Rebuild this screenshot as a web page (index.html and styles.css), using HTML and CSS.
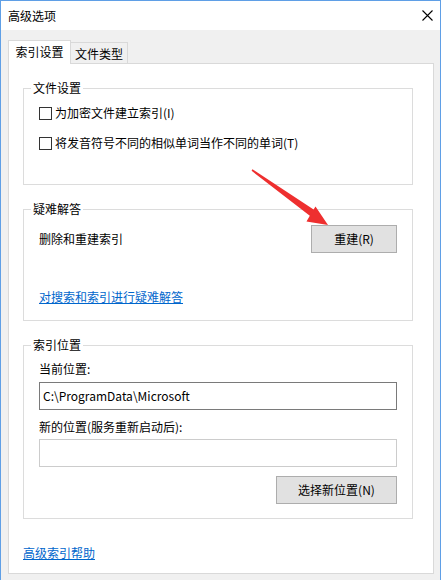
FILE: index.html
```html
<!DOCTYPE html>
<html lang="zh-CN">
<head>
<meta charset="utf-8">
<title>高级选项</title>
<link rel="stylesheet" href="styles.css">
</head>
<body>
<div class="window">
  <div class="titlebar">
    <span class="title">高级选项</span>
    <svg class="close" width="11" height="11" viewBox="0 0 11 11"><path d="M0.5 0.5 L10.5 10.5 M10.5 0.5 L0.5 10.5" stroke="#000" stroke-width="1.1" fill="none"/></svg>
  </div>
  <div class="dlgbody">
    <div class="tabs">
      <div class="tab active">索引设置</div>
      <div class="tab">文件类型</div>
    </div>
    <div class="panel">
      <fieldset class="group g1">
        <legend>文件设置</legend>
        <div class="inner">
          <div class="check first"><span class="box"></span>为加密文件建立索引(I)</div>
          <div class="check second"><span class="box"></span>将发音符号不同的相似单词当作不同的单词(T)</div>
        </div>
      </fieldset>

      <fieldset class="group g2">
        <legend>疑难解答</legend>
        <div class="inner">
          <div class="row">
            <span>删除和重建索引</span>
            <span class="btn rebuild">重建(R)</span>
          </div>
          <div class="linkrow"><a href="#">对搜索和索引进行疑难解答</a></div>
        </div>
      </fieldset>

      <fieldset class="group g3">
        <legend>索引位置</legend>
        <div class="inner">
          <div class="label l1">当前位置:</div>
          <div class="input">C:\ProgramData\Microsoft</div>
          <div class="label l2">新的位置(服务重新启动后):</div>
          <div class="input empty"></div>
          <div class="btnrow"><span class="btn choose">选择新位置(N)</span></div>
        </div>
      </fieldset>

      <div class="help"><a href="#">高级索引帮助</a></div>
    </div>
  </div>
  <svg class="arrow" width="441" height="580" viewBox="0 0 441 580">
    <polygon fill="#ee2f2f" points="252.4,169.2 313.6,209.6 315.5,206.5 328,225 306.5,221.5 309.8,215.8 251.6,170.8"/>
  </svg>
</div>
</body>
</html>
```
FILE: styles.css
```css
body {
 margin: 0;
 font-family: "Noto Sans CJK SC", "Noto Sans", sans-serif;
 font-size: 12px;
 line-height: 16px;
 color: #000;
}

.window {
 position: relative;
 width: 441px;
 height: 580px;
 box-sizing: border-box;
 border: 1px solid #5f9fe6;
 border-bottom: 0;
 background: #f0f0f0;
 overflow: hidden;
}

.titlebar {
 height: 29px;
 background: #fff;
 display: flex;
 align-items: center;
 justify-content: space-between;
 padding: 0 7px 0 7px;
}
.titlebar .title { padding-top: 0; }
.close { display: block; margin-top: -1px; }

.dlgbody {
 padding: 10px 6px 0 7px;
}

.tabs {
 display: flex;
 align-items: flex-end;
 height: 23px;
}
.tab {
 box-sizing: border-box;
 height: 21px;
 width: 58px;
 margin-left: -1px;
 padding-top: 3px;
 text-align: center;
 border: 1px solid #d9d9d9;
 border-bottom: 0;
 background: #f0f0f0;
}
.tab.active {
 position: relative;
 z-index: 1;
 margin-left: 0;
 width: 63px;
 height: 24px;
 margin-bottom: -1px;
 padding-top: 3px;
 background: #fff;
}

.panel {
 background: #fff;
 border: 1px solid #d9d9d9;
 padding: 16px 20px 12px 14px;
}

.group {
 margin: 0;
 padding: 0;
 border: 1px solid #dcdcdc;
 min-width: 0;
}
.group legend {
 margin-left: 7px;
 padding: 0 2px;
 line-height: 16px;
}
.group .inner { padding: 0 15px; }
.g1 { padding-bottom: 31px; }
.g2 { margin-top: 16px; padding-bottom: 15px; }
.g3 { margin-top: 16px; padding-bottom: 14px; }

.check {
 display: flex;
 align-items: center;
 height: 20px;
}
.check.first { margin-top: 7px; }
.check.second { margin-top: 10px; }
.box {
 box-sizing: border-box;
 width: 13px;
 height: 13px;
 border: 1px solid #333;
 background: #fff;
 margin-right: 3px;
}

.row {
 margin-top: 8px;
 height: 28px;
 display: flex;
 align-items: center;
 justify-content: space-between;
}

.btn {
 box-sizing: border-box;
 display: flex;
 align-items: center;
 justify-content: center;
 height: 28px;
 background: #e1e1e1;
 border: 1px solid #adadad;
}
.rebuild { width: 86px; }
.choose { width: 121px; }
.btnrow {
 margin-top: 9px;
 display: flex;
 justify-content: flex-end;
}

a { color: #0066cc; text-decoration: underline; }
.linkrow { margin-top: 36px; }

.label.l1 { margin-top: 8px; }
.label.l2 { margin-top: 9px; }
.input {
 box-sizing: border-box;
 height: 28px;
 margin-top: 5px;
 border: 1px solid #7a7a7a;
 padding: 5px 3px;
 background: #fff;
}
.input.empty {
 margin-top: 4px;
 border-color: #cccccc;
}

.help { margin-top: 26px; }

.arrow {
 position: absolute;
 left: -1px;
 top: -1px;
 pointer-events: none;
}
```
